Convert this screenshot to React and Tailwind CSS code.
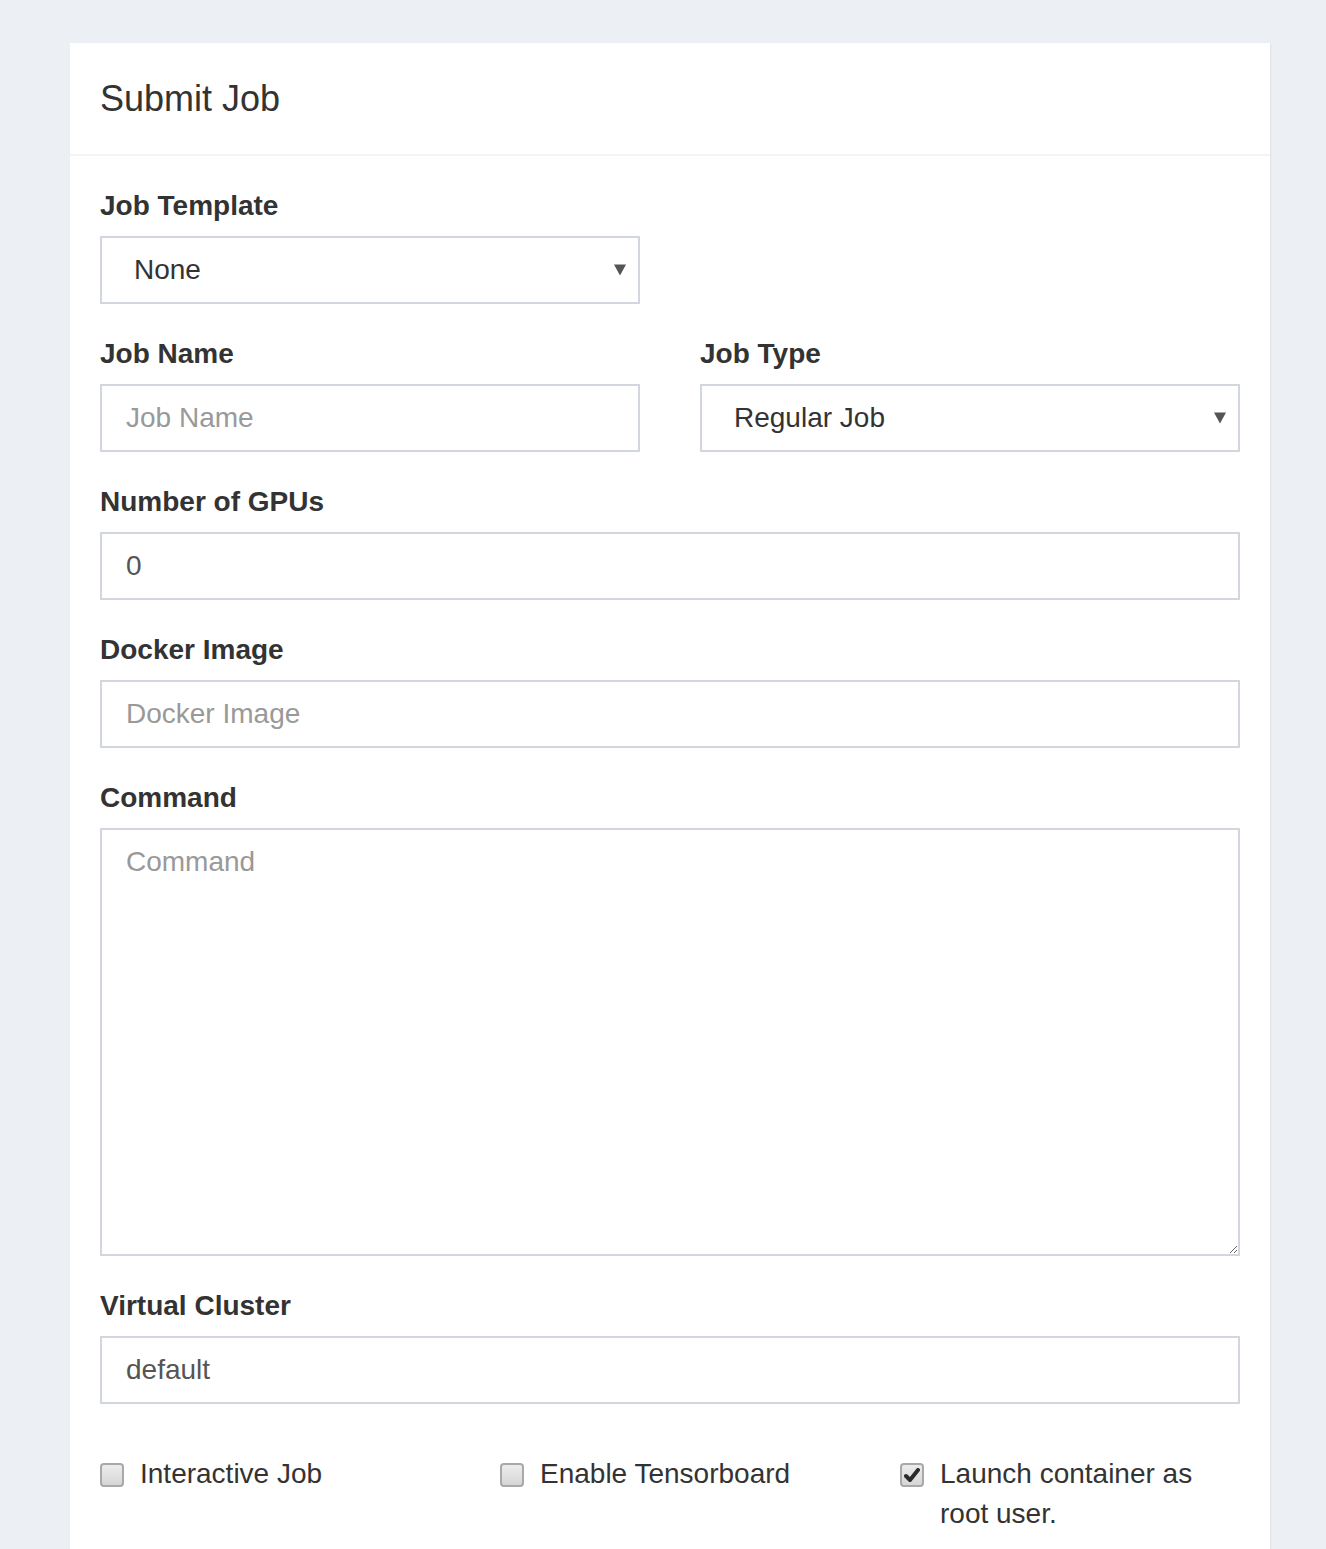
import React from 'react';

const font = { fontFamily: '"Liberation Sans", Arial, sans-serif' };

function Label({ children }) {
  return <div className="text-[28px] font-bold leading-[40px] mb-[10px] text-[#333]">{children}</div>;
}

function TextInput({ placeholder, value }) {
  return (
    <input
      type="text"
      placeholder={placeholder}
      defaultValue={value}
      style={font}
      className="block w-full h-[68px] border-2 border-[#d2d6de] px-[24px] text-[28px] text-[#555] placeholder:text-[#999] bg-white outline-none"
    />
  );
}

function FakeSelect({ value }) {
  return (
    <div className="relative flex items-center w-full h-[68px] border-2 border-[#d2d6de] pl-[32px] pr-[12px] text-[28px] text-[#333] bg-white">
      <span className="flex-1">{value}</span>
      <svg width="12" height="12" viewBox="0 0 12 12" className="shrink-0">
        <path d="M0 0.5 H12 L6 11.5 Z" fill="#555" />
      </svg>
    </div>
  );
}

function Checkbox({ checked, children }) {
  return (
    <label className="flex items-start gap-[16px] text-[28px] leading-[40px] text-[#333]">
      <span className="mt-[9px] shrink-0 w-[24px] h-[24px] rounded-[4px] border-2 border-[#a9a9a9] bg-gradient-to-b from-[#ececec] to-[#d6d6d6] flex items-center justify-center">
        {checked && (
          <svg width="16" height="15" viewBox="0 0 16 15">
            <path d="M2 8 L6 12 L14 2" fill="none" stroke="#2b2b2b" strokeWidth="4" strokeLinecap="round" strokeLinejoin="round" />
          </svg>
        )}
      </span>
      <span>{children}</span>
    </label>
  );
}

export default function App() {
  return (
    <div className="bg-[#ecf0f5] min-h-[1549px] pt-[43px]" style={font}>
      <div className="ml-[70px] w-[1200px] bg-white shadow-[1px_1px_2px_rgba(0,0,0,0.06)] min-h-[1506px]">
        {/* Header */}
        <div className="h-[113px] flex items-center px-[30px] border-b-2 border-[#f4f4f4]">
          <h3 className="text-[36px] leading-[36px] text-[#333]">Submit Job</h3>
        </div>

        {/* Body */}
        <div className="px-[30px] pt-[30px] pb-[40px]">
          <div className="grid grid-cols-2 gap-x-[60px]">
            <div className="mb-[30px]">
              <Label>Job Template</Label>
              <FakeSelect value="None" />
            </div>
          </div>

          <div className="grid grid-cols-2 gap-x-[60px]">
            <div className="mb-[30px]">
              <Label>Job Name</Label>
              <TextInput placeholder="Job Name" />
            </div>
            <div className="mb-[30px]">
              <Label>Job Type</Label>
              <FakeSelect value="Regular Job" />
            </div>
          </div>

          <div className="mb-[30px]">
            <Label>Number of GPUs</Label>
            <TextInput value="0" />
          </div>

          <div className="mb-[30px]">
            <Label>Docker Image</Label>
            <TextInput placeholder="Docker Image" />
          </div>

          <div className="mb-[30px]">
            <Label>Command</Label>
            <textarea
              placeholder="Command"
              style={font}
              className="block w-full h-[428px] border-2 border-[#d2d6de] px-[24px] py-[12px] text-[28px] leading-[40px] text-[#555] placeholder:text-[#999] bg-white outline-none resize-y"
            />
          </div>

          <div className="mb-[30px]">
            <Label>Virtual Cluster</Label>
            <TextInput value="default" />
          </div>

          <div className="grid grid-cols-3 gap-x-[60px] mt-[50px]">
            <Checkbox>Interactive Job</Checkbox>
            <Checkbox>Enable Tensorboard</Checkbox>
            <Checkbox checked>Launch container as root user.</Checkbox>
          </div>
        </div>
      </div>
    </div>
  );
}
